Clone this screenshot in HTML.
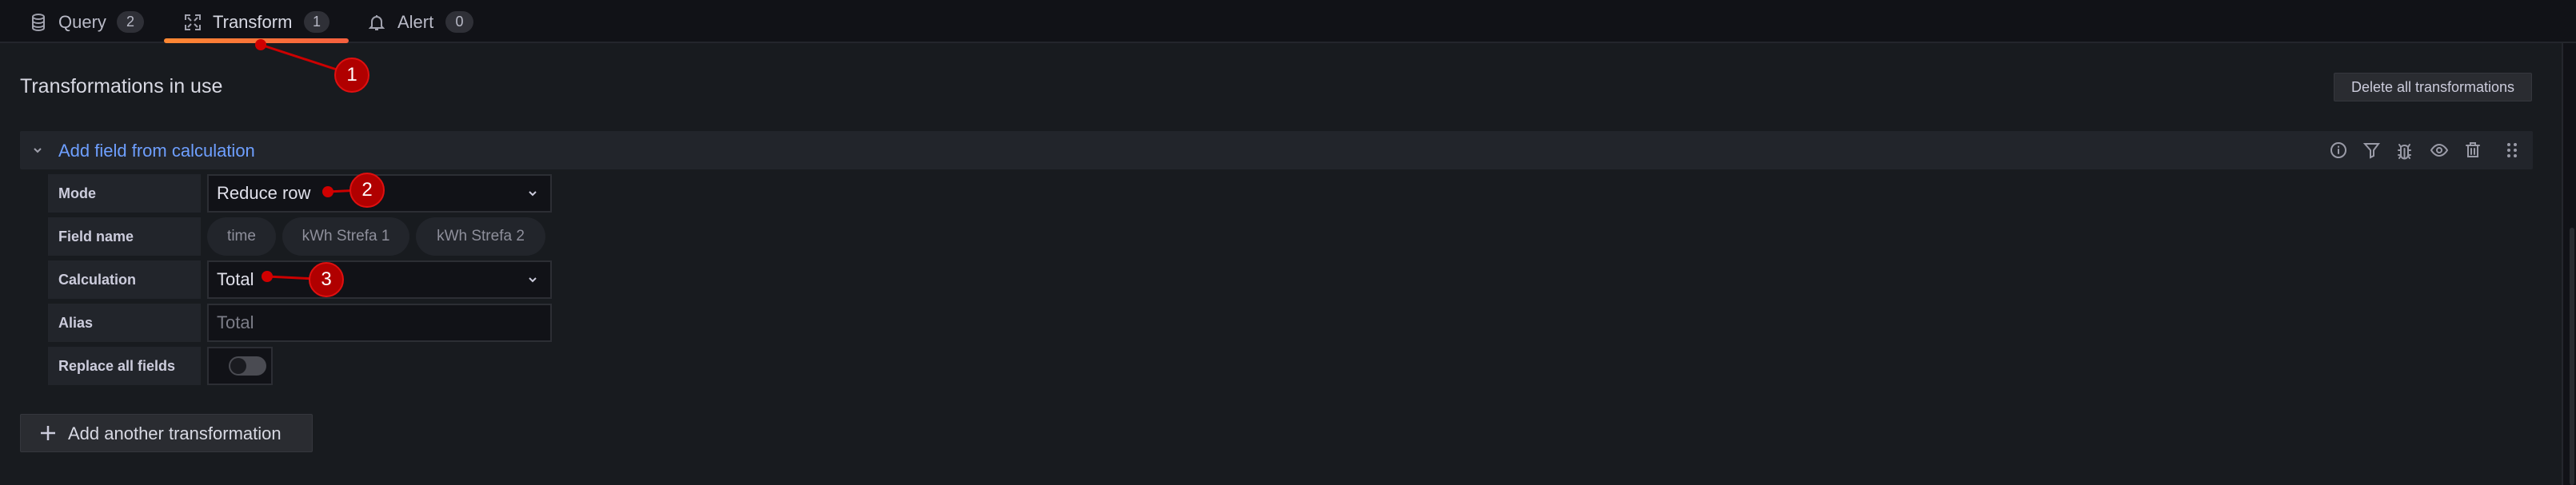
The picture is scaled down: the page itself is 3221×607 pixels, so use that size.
<!DOCTYPE html>
<html><head><style>
*{box-sizing:border-box;margin:0;padding:0}
body{width:3221px;height:607px;background:#181b1f;font-family:"Liberation Sans",sans-serif;position:relative;overflow:hidden;color:#ccccdc}
.a{position:absolute}
.tabs{left:0;top:0;width:3221px;height:54px;background:#111217;border-bottom:2px solid #24262c}
.tab{font-size:22px;color:#b9bac7;top:15px}
.badge{background:#2f3037;color:#b9bac7;border-radius:14px;height:27px;font-size:18px;line-height:27px;text-align:center;top:14px}
.lbl{left:60px;width:191px;height:48px;background:#22252b;font-size:18px;font-weight:bold;color:#ccccdc;line-height:48px;padding-left:13px}
.inp{left:259px;width:431px;height:48px;background:#111217;border:2px solid #2c2e34;font-size:22px;line-height:44px;padding-left:10px;color:#e0e0ea}
.pill{height:48px;background:#22252b;border-radius:24px;font-size:19px;color:#8e8f9b;line-height:48px;text-align:center;top:272px}
.chev{right:16px;top:17px}
.ann{width:44px;height:44px;border-radius:50%;background:#b00000;border:2px solid #e01010;color:#fff;font-size:24px;text-align:center;line-height:40px;font-family:"Liberation Sans",sans-serif}
.dot{width:14px;height:14px;border-radius:50%;background:#d00000}
.ico{top:176px}
</style></head><body>
<div class="a tabs"></div>
<svg class="a" style="left:38px;top:17px" width="20" height="22" viewBox="0 0 20 22" fill="none" stroke="#a0a1ad" stroke-width="2"><ellipse cx="10" cy="4" rx="7" ry="3"/><path d="M3 4v14c0 1.7 3 3 7 3s7-1.3 7-3V4M3 9c0 1.7 3 3 7 3s7-1.3 7-3M3 14c0 1.7 3 3 7 3s7-1.3 7-3"/></svg>
<div class="a tab" style="left:73px">Query</div>
<div class="a badge" style="left:146px;width:34px">2</div>
<svg class="a" style="left:230px;top:17px" width="22" height="22" viewBox="0 0 22 22" fill="none" stroke="#a0a1ad" stroke-width="2"><path d="M2 8V2h6M14 2h6v6M20 14v6h-6M8 20H2v-6M5 5l4 4M17 5l-4 4M17 17l-4-4M5 17l4-4"/></svg>
<div class="a tab" style="left:266px;color:#d8d9e3">Transform</div>
<div class="a badge" style="left:380px;width:32px">1</div>
<svg class="a" style="left:461px;top:17px" width="20" height="22" viewBox="0 0 20 22" fill="none" stroke="#a0a1ad" stroke-width="2"><path d="M4 16V10a6 6 0 0 1 12 0v6l2 2H2zM8 20h4M10 2v2"/></svg>
<div class="a tab" style="left:497px">Alert</div>
<div class="a badge" style="left:557px;width:35px">0</div>
<div class="a" style="left:205px;top:48px;width:231px;height:6px;border-radius:3px;background:linear-gradient(90deg,#ff8833,#f55f3e)"></div>
<div class="a" style="left:3203px;top:54px;width:18px;height:553px;background:#111217;border-left:2px solid #24262c"></div>
<div class="a" style="left:3213px;top:285px;width:6px;height:322px;background:#2a2c31;border-radius:3px"></div>
<div class="a" style="left:25px;top:94px;font-size:25px;color:#d8d9e3">Transformations in use</div>
<div class="a" style="left:2918px;top:91px;width:248px;height:36px;background:#2a2c31;border:1px solid #35373d;border-radius:2px;font-size:18px;color:#ccccdc;line-height:34px;text-align:center">Delete all transformations</div>
<div class="a" style="left:25px;top:164px;width:3142px;height:48px;background:#22252b;border-radius:2px"></div>
<svg class="a" style="left:41px;top:183px" width="12" height="10" viewBox="0 0 12 10" fill="none" stroke="#a0a1ad" stroke-width="2"><path d="M2 3l4 4 4-4"/></svg>
<div class="a" style="left:73px;top:176px;font-size:22px;color:#6e9fff">Add field from calculation</div>
<svg class="a ico" style="left:2913px" width="240" height="24" viewBox="0 0 240 24" fill="none" stroke="#9a9ba7" stroke-width="2" stroke-linecap="round">
<circle cx="11" cy="12" r="9"/><path d="M11 11v5M11 7.5v.5"/>
<path d="M44 4h17l-6 8v7l-4 2v-9z"/>
<path d="M89 8a6 6 0 0 1 9 0v10a4.5 4.5 0 0 1-9 0zM93.5 10v12M86 12h3M98 12h3M86 18h3M98 18h3M87 5l2 3M100 5l-2 3M87 22l2-3M100 22l-2-3"/>
<path d="M127 12s4-7 10-7 10 7 10 7-4 7-10 7-10-7-10-7z"/><circle cx="137" cy="12" r="3"/>
<path d="M171 6h16M176 6V3h6v3M173 6v14h12V6M177 10v7M181 10v7"/>
<g fill="#9a9ba7" stroke="none"><circle cx="224" cy="5" r="2"/><circle cx="232" cy="5" r="2"/><circle cx="224" cy="12" r="2"/><circle cx="232" cy="12" r="2"/><circle cx="224" cy="19" r="2"/><circle cx="232" cy="19" r="2"/></g></svg>

<div class="a lbl" style="top:218px">Mode</div>
<div class="a inp" style="top:218px">Reduce row<svg class="a chev" width="12" height="10" viewBox="0 0 12 10" fill="none" stroke="#ccccdc" stroke-width="2"><path d="M2 3l4 4 4-4"/></svg></div>
<div class="a lbl" style="top:272px">Field name</div>
<div class="a pill" style="left:259px;width:86px">time</div>
<div class="a pill" style="left:353px;width:159px">kWh Strefa 1</div>
<div class="a pill" style="left:520px;width:162px">kWh Strefa 2</div>
<div class="a lbl" style="top:326px">Calculation</div>
<div class="a inp" style="top:326px">Total<svg class="a chev" width="12" height="10" viewBox="0 0 12 10" fill="none" stroke="#ccccdc" stroke-width="2"><path d="M2 3l4 4 4-4"/></svg></div>
<div class="a lbl" style="top:380px">Alias</div>
<div class="a inp" style="top:380px;color:#7c7d88">Total</div>
<div class="a lbl" style="top:434px">Replace all fields</div>
<div class="a" style="left:259px;top:434px;width:82px;height:48px;background:#111217;border:2px solid #2c2e34"></div>
<div class="a" style="left:286px;top:446px;width:47px;height:24px;border-radius:12px;background:#4a4b52"></div>
<div class="a" style="left:288px;top:448px;width:20px;height:20px;border-radius:50%;background:#1a1b20"></div>
<div class="a" style="left:25px;top:518px;width:366px;height:48px;background:#2a2c31;border:1px solid #35373d;border-radius:2px"></div>
<svg class="a" style="left:50px;top:532px" width="20" height="20" viewBox="0 0 20 20" stroke="#ccccdc" stroke-width="2.5"><path d="M10 1v18M1 10h18"/></svg>
<div class="a" style="left:85px;top:530px;font-size:22px;color:#d8d9e3">Add another transformation</div>

<svg class="a" style="left:0;top:0" width="3221" height="607"><g stroke="#cc0000" stroke-width="3"><line x1="326" y1="56" x2="430" y2="90"/><line x1="410" y1="240" x2="450" y2="238"/><line x1="334" y1="346" x2="395" y2="349"/></g></svg>
<div class="a dot" style="left:319px;top:49px"></div>
<div class="a dot" style="left:403px;top:233px"></div>
<div class="a dot" style="left:327px;top:339px"></div>
<div class="a ann" style="left:418px;top:72px">1</div>
<div class="a ann" style="left:437px;top:216px">2</div>
<div class="a ann" style="left:386px;top:328px">3</div>
</body></html>
